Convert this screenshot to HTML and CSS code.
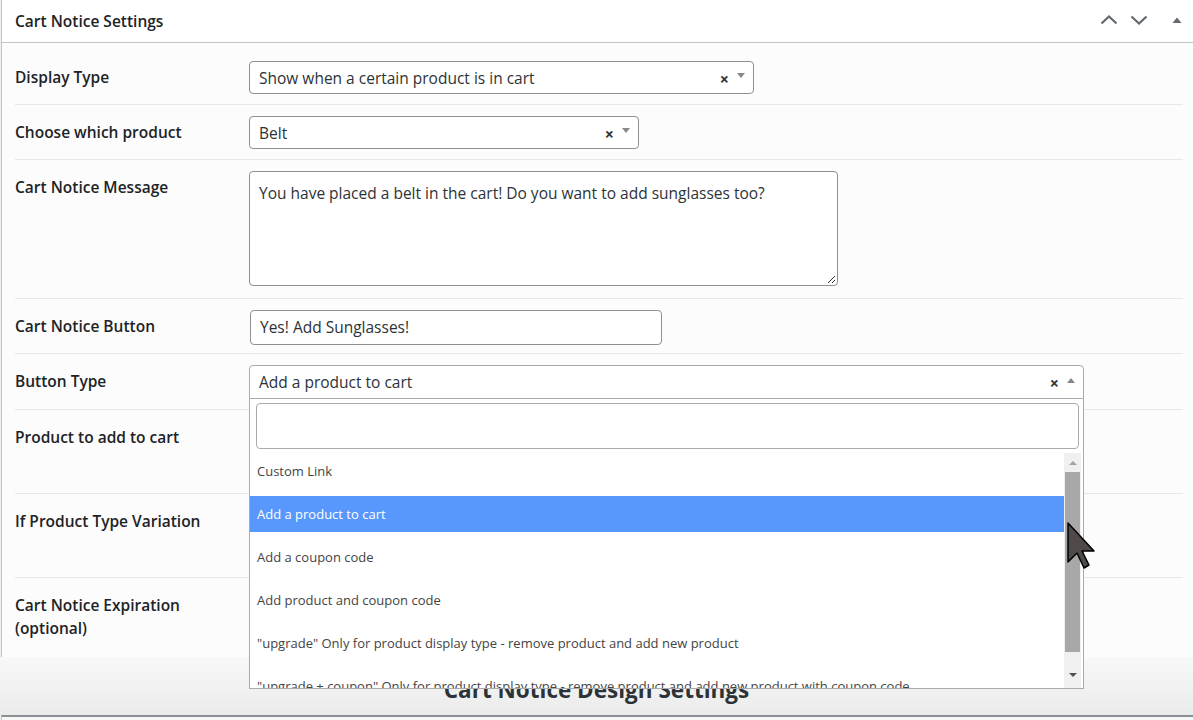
FILE: index.html
```html
<!DOCTYPE html>
<html lang="en">
<head>
    <meta charset="UTF-8">
    <meta name="viewport" content="width=device-width, initial-scale=1.0">
    <title>Cart Notice Settings</title>
    <link rel="stylesheet" href="styles.css">
</head>
<body>

    <!-- Settings box -->
    <div class="postbox">
        <div class="postbox-header">
            <h2>Cart Notice Settings</h2>
            <div class="handle-actions">
                <span class="handle-btn">
                    <svg width="18" height="18" viewBox="0 0 18 18"><polyline points="1.5,12.5 9,5.5 16.5,12.5" fill="none" stroke="#646970" stroke-width="2.2"/></svg>
                </span>
                <span class="handle-btn">
                    <svg width="18" height="18" viewBox="0 0 18 18"><polyline points="1.5,5.5 9,12.5 16.5,5.5" fill="none" stroke="#646970" stroke-width="2.2"/></svg>
                </span>
                <span class="handle-btn small">
                    <svg width="12" height="12" viewBox="0 0 12 12"><polygon points="1.5,9 6,3.5 10.5,9" fill="#646970"/></svg>
                </span>
            </div>
        </div>

        <div class="inside">
            <div class="form-row">
                <div class="form-label">Display Type</div>
                <div class="form-field">
                    <div class="select-box w-display">
                        <span class="select-value">Show when a certain product is in cart</span>
                        <span class="select-clear">×</span>
                        <span class="select-arrow"></span>
                    </div>
                </div>
            </div>

            <div class="form-row">
                <div class="form-label">Choose which product</div>
                <div class="form-field">
                    <div class="select-box w-belt">
                        <span class="select-value">Belt</span>
                        <span class="select-clear">×</span>
                        <span class="select-arrow"></span>
                    </div>
                </div>
            </div>

            <div class="form-row">
                <div class="form-label">Cart Notice Message</div>
                <div class="form-field">
                    <div class="textarea-box">
                        You have placed a belt in the cart! Do you want to add sunglasses too?
                        <svg class="resize-grip" width="10" height="10" viewBox="0 0 10 10"><line x1="2" y1="9" x2="9" y2="2" stroke="#333" stroke-width="1"/><line x1="6" y1="9" x2="9" y2="6" stroke="#333" stroke-width="1"/></svg>
                    </div>
                </div>
            </div>

            <div class="form-row short">
                <div class="form-label">Cart Notice Button</div>
                <div class="form-field">
                    <div class="text-input">Yes! Add Sunglasses!</div>
                </div>
            </div>

            <div class="form-row">
                <div class="form-label">Button Type</div>
                <div class="form-field">
                    <div class="select-wrap w-type">
                        <div class="select-box open">
                            <span class="select-value">Add a product to cart</span>
                            <span class="select-clear">×</span>
                            <span class="select-arrow up"></span>
                        </div>

                        <!-- Open dropdown -->
                        <div class="dropdown">
                            <div class="dropdown-search">
                                <div class="search-field"></div>
                            </div>
                            <div class="dropdown-results">
                                <ul class="options">
                                    <li>Custom Link</li>
                                    <li class="highlighted">Add a product to cart</li>
                                    <li>Add a coupon code</li>
                                    <li>Add product and coupon code</li>
                                    <li>"upgrade" Only for product display type - remove product and add new product</li>
                                    <li>"upgrade + coupon" Only for product display type - remove product and add new product with coupon code</li>
                                </ul>
                                <div class="scrollbar">
                                    <span class="scroll-arrow"></span>
                                    <span class="scroll-thumb"></span>
                                    <span class="scroll-arrow down"></span>
                                </div>
                            </div>
                        </div>

                        <!-- Mouse pointer -->
                        <svg class="cursor" width="30" height="48" viewBox="0 0 30 48">
                            <path d="M1 1 L1 40 L10 31 L17 46 L22 43 L15 29 L27 29 Z" fill="#4f4a48" stroke="#000" stroke-width="1.5" stroke-linejoin="round"/>
                        </svg>
                    </div>
                </div>
            </div>

            <div class="form-row tall">
                <div class="form-label">Product to add to cart</div>
                <div class="form-field"></div>
            </div>

            <div class="form-row tall">
                <div class="form-label">If Product Type Variation</div>
                <div class="form-field"></div>
            </div>

            <div class="form-row last">
                <div class="form-label">Cart Notice Expiration<br>(optional)</div>
                <div class="form-field"></div>
            </div>
        </div>
    </div>

    <h2 class="section-title">Cart Notice Design Settings</h2>

    <div class="postbox next"></div>

</body>
</html>
```

FILE: styles.css
```css
body {
    margin: 0;
    background-color: #f0f0f1;
    font-family: "Open Sans", "Noto Sans", sans-serif;
    color: #2c3338;
    overflow: hidden;
}

.postbox {
    background-color: #fcfcfc;
    border-left: 1px solid #c3c4c7;
    margin-left: 1px;
}

.postbox-header {
    display: flex;
    align-items: center;
    justify-content: space-between;
    height: 42px;
    border-bottom: 1px solid #c3c4c7;
    background-color: #fff;
}

.postbox-header h2 {
    margin: 0;
    padding: 0 13px;
    font-size: 15.5px;
    font-weight: 600;
    color: #1d2327;
}

.handle-actions {
    display: flex;
    align-items: center;
    padding-right: 8px;
}

.handle-btn {
    display: flex;
    justify-content: center;
    width: 30px;
    margin-top: -2px;
}

.handle-btn.small {
    width: 16px;
    margin-left: 15px;
}

.inside {
    padding: 7px 10px 0 13px;
}

.form-row {
    display: grid;
    grid-template-columns: 234px 1fr;
    border-bottom: 1px solid #e8e8e8;
    padding: 11px 0 10px;
}

.form-row.short {
    padding-bottom: 8px;
}

.form-row.tall {
    min-height: 62px;
}

.form-row.last {
    border-bottom: none;
    padding-bottom: 12px;
    min-height: 56px;
}

.form-label {
    font-size: 15.5px;
    font-weight: 600;
    line-height: 23px;
    padding-top: 5px;
    color: #1d2327;
}

.form-field {
    position: relative;
}

.select-box {
    display: flex;
    align-items: center;
    box-sizing: border-box;
    height: 33px;
    border: 1px solid #8c8f94;
    border-radius: 4px;
    background-color: #fff;
    padding: 0 8px 0 9px;
    font-size: 15.5px;
}

.select-value {
    flex: 1;
    white-space: nowrap;
}

.select-clear {
    font-size: 16px;
    font-weight: 700;
    color: #333;
    margin-right: 8px;
    margin-top: 2px;
}

.select-arrow {
    width: 0;
    height: 0;
    border-left: 4px solid transparent;
    border-right: 4px solid transparent;
    border-top: 5px solid #888;
    margin-top: -4px;
}

.select-arrow.up {
    border-top: none;
    border-bottom: 5px solid #888;
}

.w-display {
    width: 505px;
}

.w-belt {
    width: 390px;
}

.select-wrap {
    position: relative;
}

.w-type {
    width: 835px;
}

.select-box.open {
    border-color: #aaa;
    border-bottom-left-radius: 0;
    border-bottom-right-radius: 0;
    height: 34px;
}

.textarea-box {
    position: relative;
    box-sizing: border-box;
    width: 589px;
    height: 115px;
    border: 1px solid #8c8f94;
    border-radius: 4px;
    background-color: #fff;
    padding: 10px 9px;
    font-size: 15.5px;
    line-height: 22px;
    margin-bottom: 2px;
}

.resize-grip {
    position: absolute;
    right: 1px;
    bottom: 1px;
}

.text-input {
    box-sizing: border-box;
    width: 412px;
    height: 35px;
    margin-left: 1px;
    border: 1px solid #8c8f94;
    border-radius: 4px;
    background-color: #fff;
    padding: 0 9px;
    font-size: 15.5px;
    line-height: 33px;
}

/* dropdown list of the open select */
.dropdown {
    position: absolute;
    top: 100%;
    left: 0;
    right: 0;
    z-index: 10;
    background-color: #fff;
    border: 1px solid #aaa;
    border-top: none;
}

.dropdown-search {
    padding: 4px 4px 4px 6px;
}

.search-field {
    height: 44px;
    border: 1px solid #aaa;
    border-radius: 4px;
}

.dropdown-results {
    display: flex;
    height: 235px;
    overflow: hidden;
}

.options {
    flex: 1;
    list-style: none;
    margin: 0;
    padding: 0;
}

.options li {
    height: 36px;
    line-height: 36px;
    margin-bottom: 7px;
    padding-left: 7px;
    font-size: 13px;
    color: #444;
    white-space: nowrap;
}

.options li.highlighted {
    background-color: #5897fb;
    color: #fff;
}

.scrollbar {
    display: flex;
    flex-direction: column;
    align-items: center;
    width: 17px;
    margin-right: 2px;
    background-color: #f0f0f0;
}

.scroll-arrow {
    width: 0;
    height: 0;
    border-left: 4px solid transparent;
    border-right: 4px solid transparent;
    border-bottom: 4px solid #a3a3a3;
    margin: 8px 0 7px;
}

.scroll-arrow.down {
    border-bottom: none;
    border-top: 4px solid #505050;
    margin: 21px 0 0;
}

.scroll-thumb {
    width: 15px;
    height: 180px;
    background-color: #a8a8a8;
}

.cursor {
    position: absolute;
    left: 818px;
    top: 157px;
    z-index: 20;
}

.section-title {
    margin: 0;
    height: 58px;
    box-sizing: border-box;
    padding-top: 18px;
    text-align: center;
    font-size: 22.5px;
    font-weight: 700;
    line-height: 30px;
    color: #2c3338;
    background: linear-gradient(#f8f8f8, #ebebeb);
}

.postbox.next {
    height: 20px;
    border-top: 2px solid #8c8f94;
    background-color: #f6f7f7;
}
```
